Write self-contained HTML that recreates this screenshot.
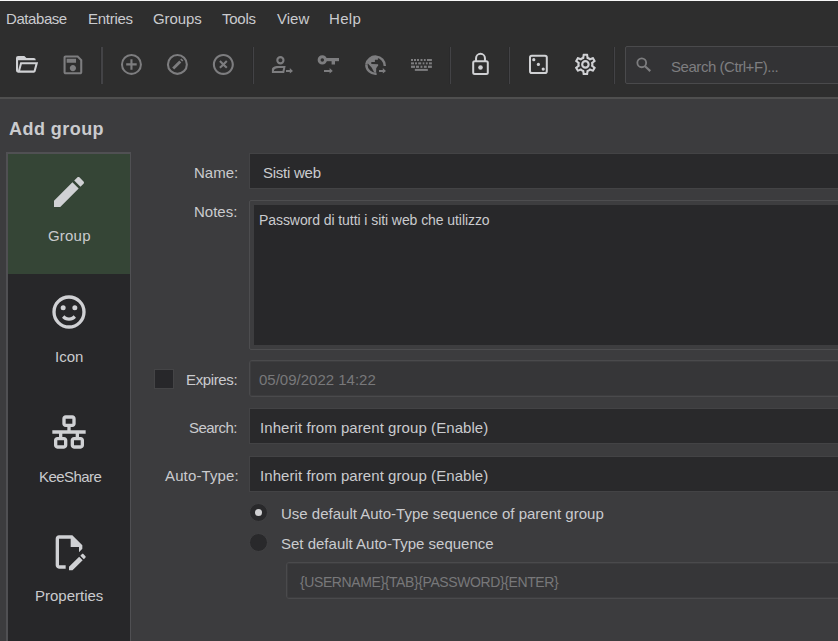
<!DOCTYPE html>
<html><head><meta charset="utf-8">
<style>
html,body{margin:0;padding:0;width:838px;height:641px;overflow:hidden;background:#3c3c3e;}
body{position:relative;font-family:"Liberation Sans",sans-serif;color:#cacbce;font-size:15px;}
.a{position:absolute;}
.t{position:absolute;white-space:nowrap;line-height:18px;height:18px;}
#topline{left:0;top:0;width:838px;height:1px;background:#f8f8f8;}
#bar{left:0;top:1px;width:838px;height:96px;background:#2e2e2e;}
#barline{left:0;top:97px;width:838px;height:2px;background:#4f4f4f;}
.sep{position:absolute;top:47px;width:1px;height:37px;background:#434346;box-shadow:-1px 0 0 #2a2a2b;}
#search{left:625px;top:46px;width:230px;height:38px;border:1px solid #4a4a4c;border-radius:2px;background:#333335;box-sizing:border-box;}
#panel{left:6px;top:152px;width:125px;height:500px;border:solid #505053;border-width:2px 1px 0 2px;background:#272729;box-sizing:border-box;}
#sel{left:8px;top:154px;width:122px;height:120px;background:#354536;}
.field{position:absolute;left:249px;width:600px;height:36px;border:1px solid #434345;background:#29292b;box-sizing:border-box;}
#notes{left:249px;top:200px;width:600px;height:150px;border:1px solid #4d4d4f;border-radius:2px;background:#3d3d3f;box-sizing:border-box;}
#notesin{left:254px;top:205px;width:600px;height:140px;background:#28282a;}
.dis{position:absolute;left:249px;width:600px;border:1px solid #4a4a4c;border-radius:3px;background:#363638;box-shadow:inset 0 0 0 1px #3d3d3f;box-sizing:border-box;}
#chk{left:154px;top:369px;width:20px;height:20px;background:#27272a;border:1px solid #444446;box-sizing:border-box;}
.radio{position:absolute;width:19px;height:19px;border-radius:50%;background:#29292b;border:1px solid #404042;box-sizing:border-box;}
</style></head><body>
<div class="a" id="topline"></div>
<div class="a" id="bar"></div>
<div class="a" id="barline"></div>

<!-- menu -->
<div class="t" style="left:6px;top:10px;letter-spacing:-0.43px;">Database</div>
<div class="t" style="left:88px;top:10px;letter-spacing:-0.27px;">Entries</div>
<div class="t" style="left:153px;top:10px;letter-spacing:-0.1px;">Groups</div>
<div class="t" style="left:222px;top:10px;letter-spacing:-0.25px;">Tools</div>
<div class="t" style="left:277px;top:10px;">View</div>
<div class="t" style="left:329px;top:10px;letter-spacing:0.3px;">Help</div>

<div class="sep" style="left:101px;width:2px;"></div>
<div class="sep" style="left:253px"></div>
<div class="sep" style="left:450px"></div>
<div class="sep" style="left:509px"></div>
<div class="sep" style="left:614px"></div>
<div class="a" id="search"></div>
<div class="t" style="left:671px;top:58px;color:#7e7e80;letter-spacing:-0.45px;">Search (Ctrl+F)...</div>

<div class="t" style="left:9px;top:118px;font-weight:bold;font-size:18px;line-height:22px;height:22px;letter-spacing:0.45px;">Add group</div>

<div class="a" id="panel"></div>
<div class="a" id="sel"></div>
<div class="t" style="left:48px;top:227px;letter-spacing:0.2px;">Group</div>
<div class="t" style="left:55px;top:347.5px;">Icon</div>
<div class="t" style="left:39px;top:468px;letter-spacing:-0.55px;">KeeShare</div>
<div class="t" style="left:35px;top:587px;">Properties</div>

<!-- form -->
<div class="t" style="left:194px;top:164px;">Name:</div>
<div class="field" style="top:153px;"></div>
<div class="t" style="left:263px;top:164px;letter-spacing:-0.25px;">Sisti web</div>

<div class="t" style="left:194px;top:203px;">Notes:</div>
<div class="a" id="notes"></div>
<div class="a" id="notesin"></div>
<div class="t" style="left:259px;top:211px;font-size:14px;letter-spacing:-0.07px;">Password di tutti i siti web che utilizzo</div>

<div class="a" id="chk"></div>
<div class="t" style="left:186px;top:371px;letter-spacing:-0.37px;">Expires:</div>
<div class="dis" style="top:360px;height:37px;"></div>
<div class="t" style="left:259px;top:371px;color:#78787a;">05/09/2022 14:22</div>

<div class="t" style="left:189px;top:419px;letter-spacing:-0.55px;">Search:</div>
<div class="field" style="top:408px;"></div>
<div class="t" style="left:260px;top:419px;letter-spacing:0.07px;">Inherit from parent group (Enable)</div>

<div class="t" style="left:165px;top:467px;letter-spacing:0.13px;">Auto-Type:</div>
<div class="field" style="top:456px;"></div>
<div class="t" style="left:260px;top:467px;letter-spacing:0.07px;">Inherit from parent group (Enable)</div>

<div class="radio" style="left:249px;top:503px;"></div>
<div class="a" style="left:255px;top:509px;width:7px;height:7px;border-radius:50%;background:#d0d0d2;"></div>
<div class="t" style="left:281px;top:505px;">Use default Auto-Type sequence of parent group</div>
<div class="radio" style="left:249px;top:533px;"></div>
<div class="t" style="left:281px;top:535px;">Set default Auto-Type sequence</div>

<div class="dis" style="left:286px;top:562px;height:37px;"></div>
<div class="t" style="left:300px;top:573px;color:#78787a;font-size:14px;letter-spacing:-0.4px;">{USERNAME}{TAB}{PASSWORD}{ENTER}</div>

<svg class="a" style="left:0;top:0" width="838" height="641" viewBox="0 0 838 641">
<!-- toolbar -->
<g fill="#d0d1d4"><path transform="translate(13.92,51.83) scale(1.0417)" d="M6.1,10L4,18V8H21A2,2 0 0,0 19,6H12L10,4H4A2,2 0 0,0 2,6V18A2,2 0 0,0 4,20H19C19.9,20 20.7,19.4 20.9,18.5L23.2,10H6.1M19,18H6L7.6,12H20.6L19,18Z"/></g>
<g fill="#7d7d7f">
<path transform="translate(60.4,52.4) scale(1.0417)" d="M17 3H5C3.89 3 3 3.9 3 5V19C3 20.1 3.89 21 5 21H19C20.1 21 21 20.1 21 19V7L17 3M19 19H5V5H16.17L19 7.83V19M12 12C10.34 12 9 13.34 9 15S10.34 18 12 18 15 16.66 15 15 13.66 12 12 12M6 6H15V10H6V6Z"/>
<path transform="translate(131.45,64.4) scale(1.05) translate(-12,-12)" d="M12,20C7.59,20 4,16.41 4,12C4,7.59 7.59,4 12,4C16.41,4 20,7.59 20,12C20,16.41 16.41,20 12,20M12,2A10,10 0 0,0 2,12A10,10 0 0,0 12,22A10,10 0 0,0 22,12A10,10 0 0,0 12,2M13,7H11V11H7V13H11V17H13V13H17V11H13V7Z"/>
<path transform="translate(223.35,64.4) scale(1.05) translate(-12,-12)" d="M12,20C7.59,20 4,16.41 4,12C4,7.59 7.59,4 12,4C16.41,4 20,7.59 20,12C20,16.41 16.41,20 12,20M12,2C6.47,2 2,6.47 2,12C2,17.53 6.47,22 12,22C17.53,22 22,17.53 22,12C22,6.47 17.530,2 12,2M14.59,8L12,10.59L9.41,8L8,9.41L10.59,12L8,14.59L9.41,16L12,13.41L14.59,16L16,14.59L13.41,12L16,9.41L14.59,8Z"/>
</g>
<g fill="none" stroke="#7d7d7f">
<circle cx="177.4" cy="64.4" r="9.45" stroke-width="2.1"/>
<line x1="173.2" y1="68.6" x2="180.3" y2="61.5" stroke-width="2.8"/>
<line x1="181.2" y1="60.6" x2="182.4" y2="59.4" stroke-width="2.8"/>
<circle cx="280.4" cy="60.25" r="3.1" stroke-width="2.1"/>
<circle cx="322.3" cy="59.9" r="3.2" stroke-width="2.9"/>
<circle cx="641.75" cy="62.85" r="4.4" stroke-width="1.8"/>
<line x1="645" y1="66.3" x2="650.3" y2="71.1" stroke-width="2.1"/>
</g>
<g fill="#7d7d7f">
<path d="M271.9,73V69.5C271.9,67.2 274.5,65.9 278,65.9H285.6L284.2,73ZM274,71V70.2C274,69 276,67.9 279,67.9H283.2L282.5,71Z" fill-rule="evenodd"/>
<path d="M286,70H289.8V68.1L293,71L289.8,73.6V72H286Z"/>
<rect x="326" y="58" width="13" height="3.2"/>
<rect x="331.6" y="60" width="3.4" height="4.5"/>
<path d="M324,70H329.6V68.1L332.8,71L329.6,73.6V72H324Z"/>
<path d="M379,70H382.8V68.1L386,71L382.8,73.6V72H379Z"/>
<path d="M366.3,64.5 A9.3,9.3 0 0 1 384.8,66" stroke="#7d7d7f" stroke-width="2.4" fill="none"/>
<path d="M366.3,64.5 A9.3,9.3 0 0 0 376.6,73.8" stroke="#7d7d7f" stroke-width="2.4" fill="none"/>
<clipPath id="gclip"><circle cx="375.6" cy="64.5" r="8.2"/></clipPath><path clip-path="url(#gclip)" d="M379,53.5 L379,57.3 L377.9,57.9 L377.9,59.7 L374.9,59.7 L374.9,62.1 L371.3,62.1 L371.3,64 L378,64.2 L378.3,65.3 L376.2,68.2 L376.1,75 L374,75 L373.9,71.8 L371.6,67.5 L367.2,62.8 L365,62.8 L365,53.5Z"/>
<rect x="411" y="59" width="2" height="2"/><rect x="414" y="59" width="2" height="2"/><rect x="417" y="59" width="2" height="2"/><rect x="420.5" y="59" width="2" height="2"/><rect x="423.9" y="59" width="1.8" height="2"/><rect x="427" y="59" width="4.9" height="2"/>
<rect x="411" y="62.35" width="3" height="2"/><rect x="415" y="62.35" width="2" height="2"/><rect x="418.2" y="62.35" width="3" height="2"/><rect x="422.7" y="62.35" width="1.7" height="2"/><rect x="425.9" y="62.35" width="1.8" height="2"/><rect x="429" y="62.35" width="2.9" height="2"/>
<rect x="411" y="65.7" width="4" height="2.2"/><rect x="416" y="65.7" width="3" height="2.2"/><rect x="420.5" y="65.7" width="1.9" height="2.2"/><rect x="423.9" y="65.7" width="2.8" height="2.2"/><rect x="428" y="65.7" width="3.9" height="2.2"/>
<rect x="414.85" y="68.9" width="13" height="2"/>
</g>
<g fill="none" stroke="#d0d1d4" stroke-width="2">
<rect x="473.2" y="61.3" width="14.6" height="12.8" rx="1.5"/>
<path d="M476.05,61.3V58.25A4.45,4.45 0 0 1 484.95,58.25V61.3"/>
<rect x="530" y="55.8" width="16.8" height="17.2" rx="1.8"/>
</g>
<g fill="#d0d1d4">
<circle cx="480.5" cy="67.5" r="2.3"/>
<circle cx="533.8" cy="59.7" r="1.6"/><circle cx="538.4" cy="64.4" r="1.6"/><circle cx="543.2" cy="69.1" r="1.6"/>
<path transform="translate(585.4,64.4) scale(1.07) translate(-12,-12)" d="M12,8A4,4 0 0,1 16,12A4,4 0 0,1 12,16A4,4 0 0,1 8,12A4,4 0 0,1 12,8M12,10A2,2 0 0,0 10,12A2,2 0 0,0 12,14A2,2 0 0,0 14,12A2,2 0 0,0 12,10M10,22C9.75,22 9.54,21.820 9.5,21.58L9.13,18.93C8.5,18.68 7.96,18.34 7.44,17.94L4.95,18.95C4.73,19.03 4.46,18.95 4.34,18.73L2.34,15.27C2.21,15.05 2.27,14.78 2.46,14.63L4.57,12.97L4.5,12L4.57,11L2.46,9.37C2.27,9.22 2.21,8.95 2.34,8.73L4.34,5.27C4.46,5.05 4.73,4.96 4.95,5.05L7.44,6.05C7.96,5.66 8.5,5.32 9.13,5.07L9.5,2.42C9.54,2.18 9.75,2 10,2H14C14.25,2 14.46,2.18 14.5,2.42L14.87,5.07C15.5,5.32 16.04,5.66 16.56,6.05L19.05,5.05C19.27,4.96 19.54,5.05 19.66,5.27L21.66,8.73C21.79,8.95 21.73,9.22 21.54,9.37L19.43,11L19.5,12L19.43,13L21.54,14.63C21.73,14.78 21.79,15.05 21.66,15.27L19.66,18.73C19.54,18.95 19.27,19.04 19.05,18.95L16.56,17.95C16.04,18.34 15.5,18.68 14.87,18.93L14.5,21.58C14.46,21.82 14.25,22 14,22H10M11.25,4L10.88,6.61C9.68,6.86 8.62,7.5 7.85,8.39L5.44,7.35L4.69,8.65L6.8,10.2C6.4,11.37 6.4,12.64 6.8,13.8L4.68,15.36L5.43,16.66L7.86,15.62C8.63,16.5 9.68,17.14 10.87,17.38L11.24,20H12.76L13.13,17.39C14.32,17.14 15.37,16.5 16.14,15.62L18.57,16.66L19.32,15.36L17.2,13.81C17.6,12.64 17.6,11.37 17.2,10.2L19.31,8.65L18.56,7.35L16.15,8.39C15.38,7.5 14.32,6.86 13.12,6.62L12.75,4H11.25Z"/>
</g>
<!-- left panel -->
<g fill="#d0d1d4" transform="translate(49,172) scale(1.6667)"><path d="M20.71,7.04C21.1,6.65 21.1,6 20.71,5.63L18.37,3.29C18,2.9 17.35,2.9 16.96,3.29L15.12,5.12L18.87,8.87M3,17.25V21H6.75L17.81,9.93L14.06,6.18L3,17.25Z"/></g>
<g fill="#d0d1d4" transform="translate(49,292) scale(1.6667)"><path d="M12,2C6.47,2 2,6.47 2,12A10,10 0 0,0 12,22A10,10 0 0,0 22,12A10,10 0 0,0 12,2M12,20A8,8 0 0,1 4,12A8,8 0 0,1 12,4A8,8 0 0,1 20,12A8,8 0 0,1 12,20M15.5,8A1.5,1.5 0 0,1 17,9.5A1.5,1.5 0 0,1 15.5,11A1.5,1.5 0 0,1 14,9.5A1.5,1.5 0 0,1 15.5,8M8.5,8A1.5,1.5 0 0,1 10,9.5A1.5,1.5 0 0,1 8.5,11A1.5,1.5 0 0,1 7,9.5A1.5,1.5 0 0,1 8.5,8M12,17.23C10.25,17.23 8.71,16.5 7.81,15.42L9.23,14C9.68,14.72 10.75,15.23 12,15.23C13.25,15.23 14.32,14.72 14.77,14L16.19,15.42C15.29,16.5 13.75,17.23 12,17.23Z"/></g>
<g fill="#d0d1d4" transform="translate(49,412) scale(1.6667)"><path d="M10,2C8.89,2 8,2.89 8,4V7C8,8.11 8.89,9 10,9H11V11H2V13H6V15H5C3.89,15 3,15.89 3,17V20C3,21.11 3.89,22 5,22H9C10.11,22 11,21.11 11,20V17C11,15.89 10.11,15 9,15H8V13H16V15H15C13.89,15 13,15.89 13,17V20C13,21.11 13.89,22 15,22H19C20.11,22 21,21.11 21,20V17C21,15.89 20.11,15 19,15H18V13H22V11H13V9H14C15.11,9 16,8.11 16,7V4C16,2.89 15.11,2 14,2H10M10,4H14V7H10V4M5,17H9V20H5V17M15,17H19V20H15V17Z"/></g>
<g fill="#d0d1d4" transform="translate(49,532) scale(1.6667)"><path d="M10 20H6V4H13V9H18V12.1L20 10.1V8L14 2H6C4.9 2 4 2.9 4 4V20C4 21.1 4.9 22 6 22H10V20M20.2 13C20.3 13 20.5 13.1 20.6 13.2L21.9 14.5C22.1 14.7 22.1 15.1 21.9 15.3L20.9 16.3L18.8 14.2L19.8 13.2C19.9 13.1 20 13 20.2 13M20.2 16.9L14.1 23H12V20.9L18.1 14.8L20.2 16.9Z"/></g>
</svg>
</body></html>
